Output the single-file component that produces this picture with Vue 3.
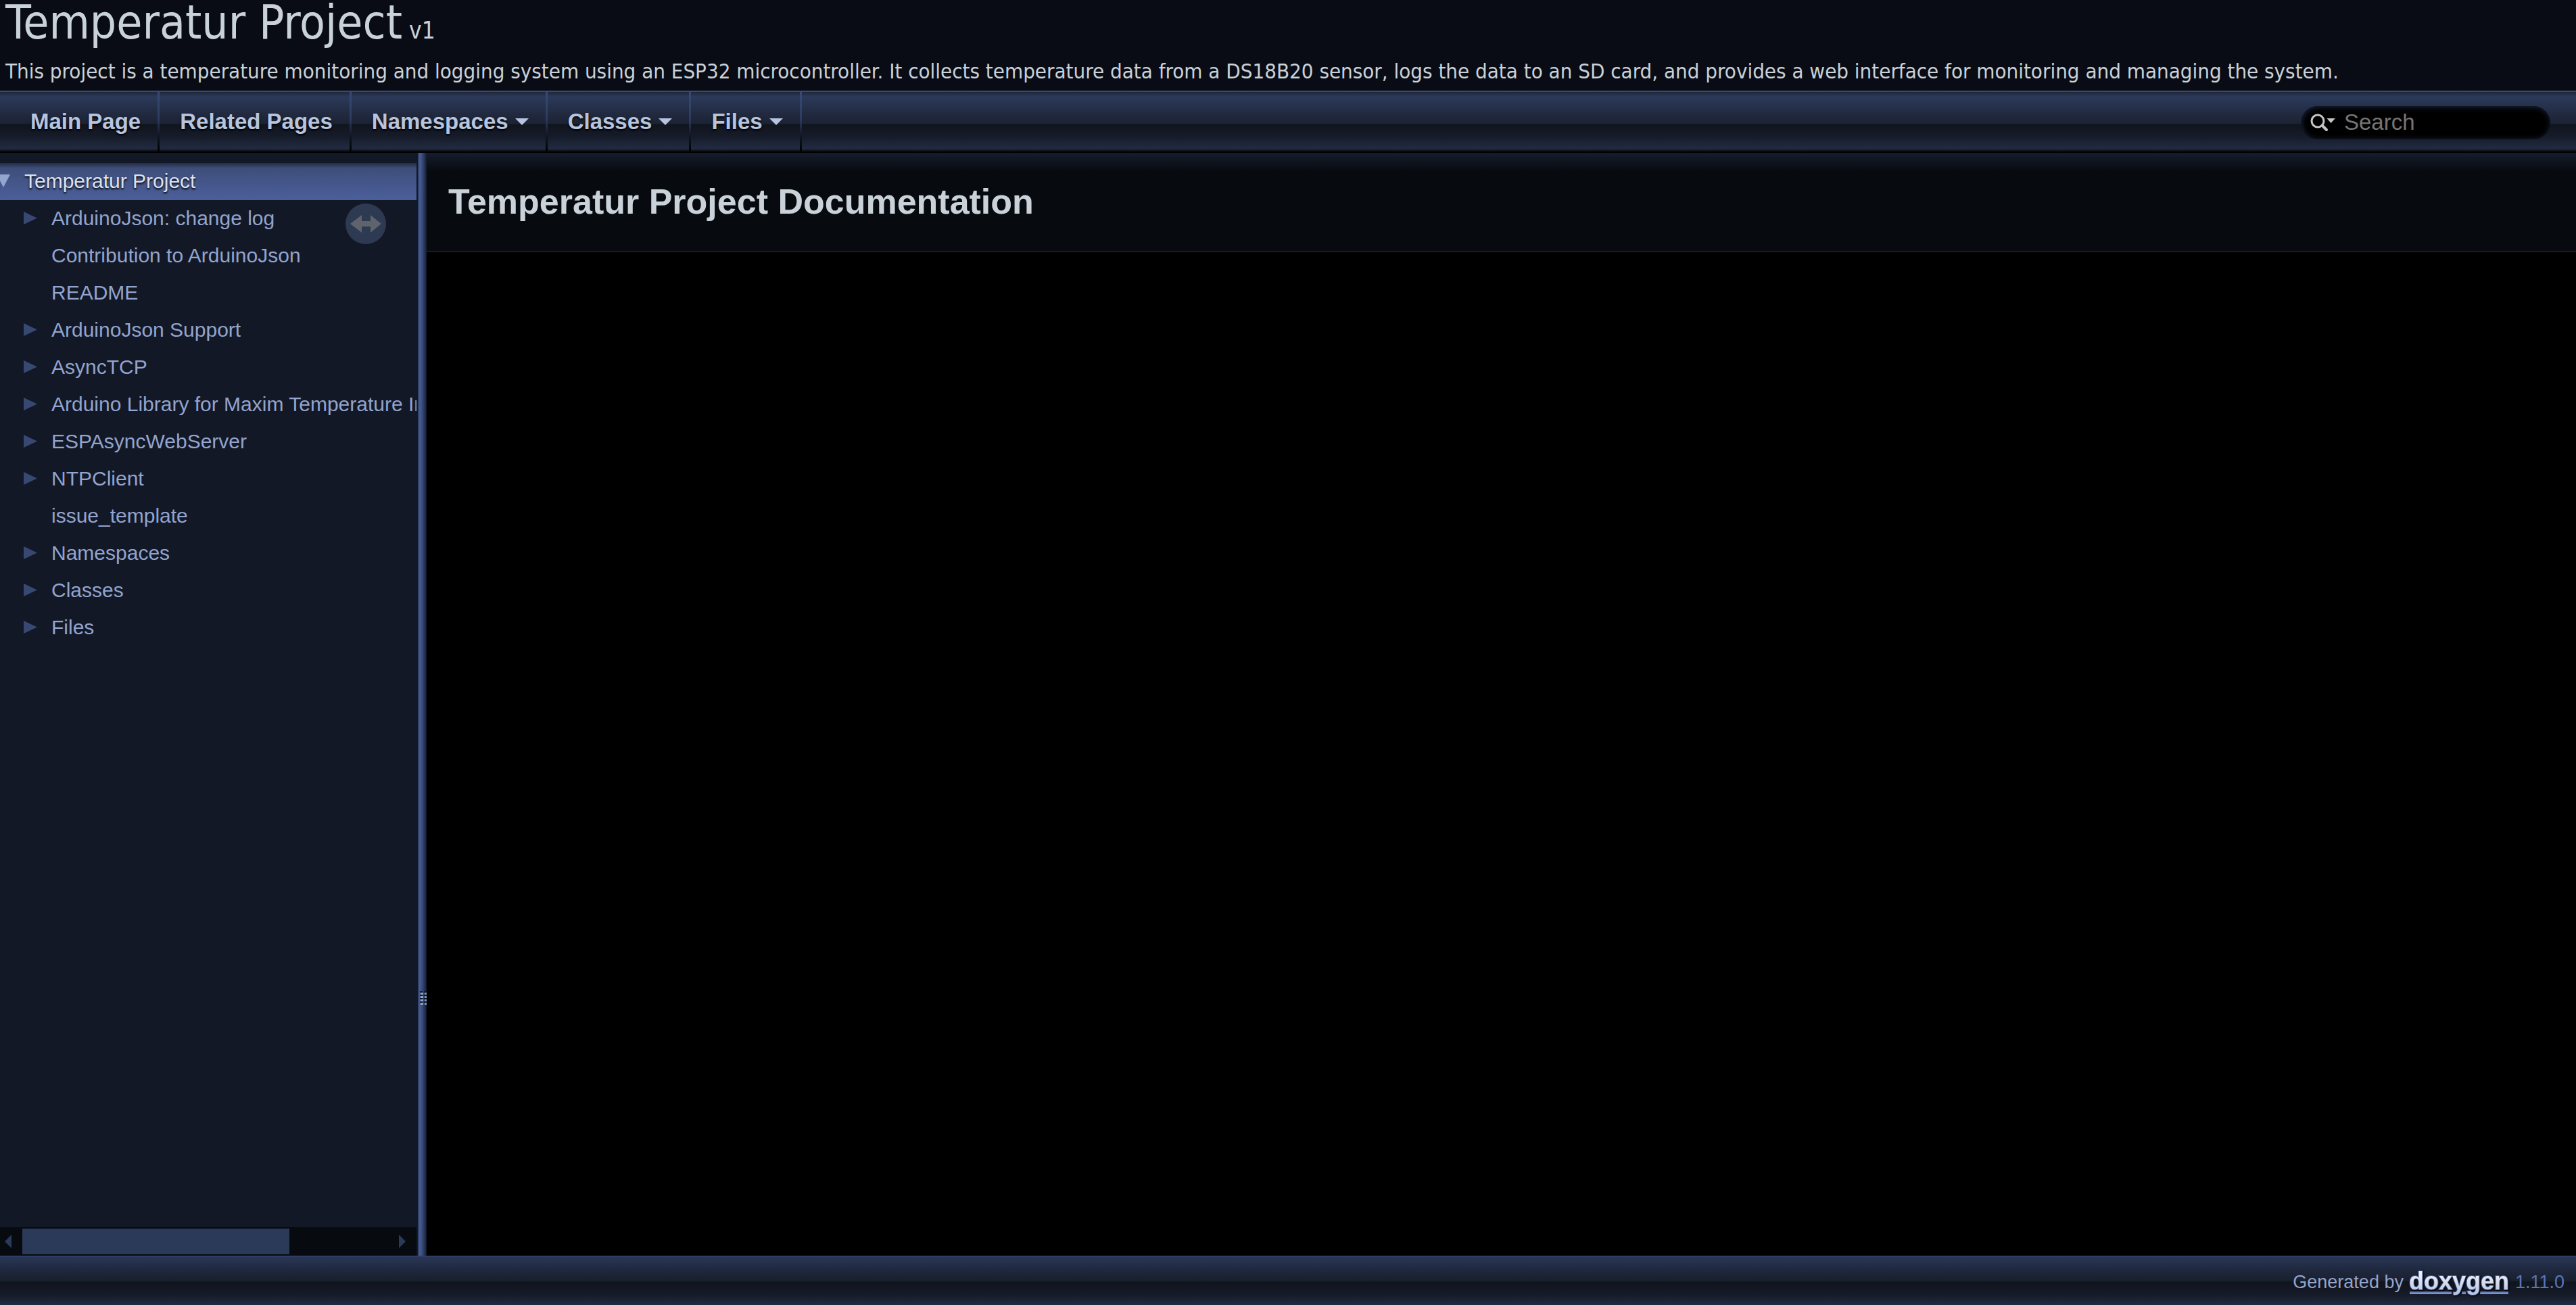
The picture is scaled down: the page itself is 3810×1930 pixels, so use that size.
<script setup>
const menu = [
  { label: 'Main Page', sub: false },
  { label: 'Related Pages', sub: false },
  { label: 'Namespaces', sub: true },
  { label: 'Classes', sub: true },
  { label: 'Files', sub: true },
]

const tree = [
  { label: 'ArduinoJson: change log', children: true },
  { label: 'Contribution to ArduinoJson', children: false },
  { label: 'README', children: false },
  { label: 'ArduinoJson Support', children: true },
  { label: 'AsyncTCP', children: true },
  { label: 'Arduino Library for Maxim Temperature Integrated Circuits', children: true },
  { label: 'ESPAsyncWebServer', children: true },
  { label: 'NTPClient', children: true },
  { label: 'issue_template', children: false },
  { label: 'Namespaces', children: true },
  { label: 'Classes', children: true },
  { label: 'Files', children: true },
]
</script>

<template>
  <div class="page">
    <header class="title-area">
      <div class="project-name">Temperatur Project <span class="project-number">v1</span></div>
      <div class="project-brief">This project is a temperature monitoring and logging system using an ESP32 microcontroller. It collects temperature data from a DS18B20 sensor, logs the data to an SD card, and provides a web interface for monitoring and managing the system.</div>
    </header>

    <nav class="main-nav">
      <ul class="menu">
        <li v-for="item in menu" :key="item.label">
          <a href="#" class="menu-link">{{ item.label }}<span v-if="item.sub" class="sub-arrow"></span></a>
        </li>
      </ul>
      <div class="search-box">
        <svg class="search-icon" width="32" height="24" viewBox="0 0 32 24" aria-hidden="true">
          <circle cx="11" cy="10" r="9" fill="none" stroke="#c5c5c5" stroke-width="3" />
          <path d="M17.500 16.500L24 23" stroke="#c5c5c5" stroke-width="4" stroke-linecap="round" />
          <path d="M24.500 6h12.500l-6.500 7z" fill="#c5c5c5" />
        </svg>
        <input class="search-field" type="text" placeholder="Search" aria-label="Search" />
      </div>
    </nav>

    <div class="body">
      <aside class="side-nav">
        <div class="tree">
          <div class="row selected">
            <button class="toggle open" type="button" aria-label="Collapse">
              <svg width="20" height="19" viewBox="0 0 20 19"><path d="M0 0h20L10 19z" fill="#93a6d0" /></svg>
            </button>
            <a href="#">Temperatur Project</a>
          </div>
          <div v-for="node in tree" :key="node.label" class="row child">
            <button v-if="node.children" class="toggle" type="button" aria-label="Expand">
              <svg width="20" height="19" viewBox="0 0 20 19"><path d="M0 0v19L20 9.500z" fill="#374873" /></svg>
            </button>
            <a href="#">{{ node.label }}</a>
          </div>
          <button class="sync" type="button" aria-label="Toggle sync">
            <svg width="60" height="60" viewBox="0 0 60 60">
              <circle cx="30" cy="30" r="30" fill="#2e3952" />
              <path d="M7 30L24 17V26H37V17L53 30L37 43V34H24V43z" fill="#5f636b" />
            </svg>
          </button>
        </div>
        <div class="scrollbar">
          <svg width="10" height="20" viewBox="0 0 10 20"><path d="M10 0v20L0 10z" fill="#2c3a59" /></svg>
          <div class="track"><div class="thumb"></div></div>
          <svg width="10" height="20" viewBox="0 0 10 20"><path d="M0 0v20L10 10z" fill="#2c3a59" /></svg>
        </div>
      </aside>
      <div class="splitbar">
        <svg class="grip" width="10" height="20" viewBox="0 0 10 20">
          <g v-for="r in 4" :key="r">
            <rect x="0" :y="r * 5 - 5" width="4" height="2" fill="#101826" />
            <rect x="1" :y="r * 5 - 3" width="4" height="3" fill="#90a5ce" />
            <rect x="6" :y="r * 5 - 5" width="4" height="2" fill="#101826" />
            <rect x="7" :y="r * 5 - 3" width="3" height="3" fill="#7f95c0" />
          </g>
        </svg>
      </div>
      <main class="content">
        <div class="content-header">
          <h1>Temperatur Project Documentation</h1>
        </div>
      </main>
    </div>

    <footer class="footer">
      <span class="generated">Generated by</span>
      <a href="#" class="logo" aria-label="doxygen">
        <svg width="151" height="42" viewBox="0 0 151 42">
          <defs>
            <linearGradient id="logo-fill" x1="0" y1="0" x2="0" y2="1">
              <stop offset="0" stop-color="#ffffff" />
              <stop offset="1" stop-color="#b6c1dd" />
            </linearGradient>
            <linearGradient id="logo-line" x1="0" y1="0" x2="0" y2="1">
              <stop offset="0" stop-color="#4f6aad" />
              <stop offset="1" stop-color="#8ea2d2" />
            </linearGradient>
          </defs>
          <rect x="2" y="35" width="62" height="4" fill="url(#logo-line)" />
          <rect x="79" y="35" width="6" height="4" fill="url(#logo-line)" />
          <rect x="106" y="35" width="42" height="4" fill="url(#logo-line)" />
          <text class="logo-text" x="1" y="32">doxygen</text>
        </svg>
      </a>
      <span class="version">1.11.0</span>
    </footer>
  </div>
</template>

<style>
body {
  background: #000;
}
</style>

<style scoped>
.page {
  display: flex;
  flex-direction: column;
  min-height: 100vh;
  overflow: hidden;
  background: #000;
  color: #c9d1d9;
  font-family: "Liberation Sans", Arial, sans-serif;
}

a {
  color: inherit;
  text-decoration: none;
}

button {
  padding: 0;
  border: 0;
  background: none;
}

svg {
  display: block;
  overflow: visible;
}

.title-area {
  padding: 0 8px 10px;
  background: #090c14;
  border-bottom: 2px solid #384a74;
  font-family: "DejaVu Sans Condensed", "DejaVu Sans", sans-serif;
  font-stretch: condensed;
  white-space: nowrap;
}

.project-name {
  display: flex;
  align-items: baseline;
  gap: 10px;
  height: 66px;
  font-size: 69px;
  line-height: 66px;
}

.project-number {
  font-size: 35px;
  line-height: 40px;
}

.project-brief {
  margin-top: 20px;
  font-size: 31px;
  line-height: 38px;
}

.main-nav {
  display: flex;
  justify-content: space-between;
  align-items: center;
  height: 90px;
  padding: 0 38px 0 15px;
  background: linear-gradient(#1e2639 0, #2c3a5a 7px, #222b42 30px, #1b2232 47px, #10141d 48px, #161b29 65px, #212b41 84px, #000 89px);
}

.menu {
  display: flex;
  align-self: stretch;
  margin: 0;
  padding: 0;
  list-style: none;
}

.menu-link {
  display: flex;
  align-items: center;
  gap: 10px;
  height: 88px;
  padding: 0 28px 0 30px;
  background: linear-gradient(#384a74 0, #2d3b60 45%, #101622 75%, #000) right / 3px 100% no-repeat;
  color: #b6c4df;
  font-size: 33px;
  font-weight: bold;
  text-shadow: 0 2px 3px #000;
}

.sub-arrow {
  border: 10px solid transparent;
  border-top-color: #b6c4df;
  border-bottom: 0;
}

.search-box {
  display: flex;
  align-items: center;
  gap: 18px;
  box-sizing: border-box;
  width: 369px;
  height: 49px;
  padding: 0 20px 0 14px;
  border-radius: 25px;
  background: #000;
  box-shadow: inset 1px 1px 8px #1c2842;
}

.search-icon {
  flex: none;
}

.search-field {
  flex: 1;
  min-width: 0;
  padding: 0;
  border: 0;
  outline: 0;
  background: none;
  color: #c5c5c5;
  font: 33px "Liberation Sans", Arial, sans-serif;
}

.search-field::placeholder {
  color: #757575;
}

.body {
  display: flex;
  flex: 1;
}

.side-nav {
  display: flex;
  flex: 0 0 618px;
  flex-direction: column;
  min-width: 0;
  background: #121825;
}

.tree {
  position: relative;
  flex: 1;
  margin-right: 2px;
  padding-top: 15px;
  overflow: hidden;
}

.row {
  display: flex;
  align-items: center;
  box-sizing: border-box;
  height: 55px;
  padding: 0 0 2px 36px;
  color: #92a4cf;
  font-size: 30px;
  line-height: 53px;
  white-space: nowrap;
}

.child {
  padding-left: 76px;
}

.toggle {
  width: 20px;
  margin: 0 21px 0 -41px;
}

.selected {
  background: linear-gradient(#222c44 0, #3e4e7a 8px, #475990 70%, #4a5f9a);
  color: #dce2ef;
  text-shadow: 0 2px 3px #000;
}

.sync {
  position: absolute;
  top: 75px;
  right: 45px;
}

.scrollbar {
  display: flex;
  align-items: center;
  gap: 16px;
  height: 42px;
  margin-right: 2px;
  padding: 0 16px 0 7px;
  box-sizing: border-box;
  background: #070a0f;
}

.track {
  flex: 1;
}

.thumb {
  width: 73%;
  height: 38px;
  background: #2c3a59;
}

.splitbar {
  position: relative;
  flex: 0 0 13px;
  background: linear-gradient(90deg, #22304e 0, #435891 2px, #435891 4px, #2b395c 9px, #151c2e);
}

.grip {
  position: absolute;
  right: 0;
  bottom: 371px;
}

.content {
  flex: 1;
}

.content-header {
  padding: 45px 32px 46px;
  border-bottom: 2px solid #161c2e;
  background: linear-gradient(#161c2c 0, #070a0f 28px);
}

h1 {
  margin: 0;
  font-size: 52px;
  line-height: 54px;
}

.footer {
  display: flex;
  justify-content: flex-end;
  align-items: center;
  gap: 7px;
  height: 73px;
  padding: 3px 17px 0 0;
  box-sizing: border-box;
  border-top: 2px solid #2e3d61;
  background: linear-gradient(#2a3656 0, #1f2940 17px, #19202e 35px, #10141d 37px, #161b29 56px, #212b43);
  font-size: 27px;
}

.generated {
  color: #92a4cf;
}

.logo-text {
  font: bold 36px "Liberation Sans", Arial, sans-serif;
  fill: url(#logo-fill);
  stroke: #3f5590;
  stroke-width: 2px;
  paint-order: stroke;
  filter: drop-shadow(1px 1px 1px #000);
}

.version {
  color: #5876ba;
}
</style>
